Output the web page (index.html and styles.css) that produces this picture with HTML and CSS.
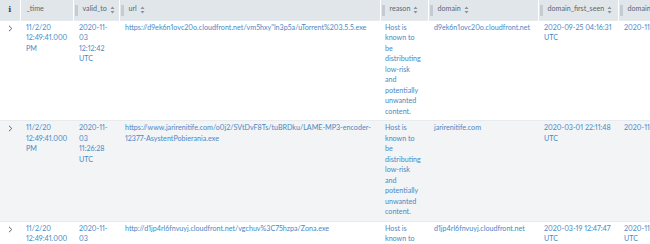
FILE: index.html
```html
<!DOCTYPE html>
<html>
<head>
<meta charset="utf-8">
<link rel="stylesheet" href="styles.css">
</head>
<body>
<div class="wrap">
<table class="results">
  <colgroup>
    <col class="c-info"><col class="c-time"><col class="c-valid"><col class="c-url"><col class="c-reason"><col class="c-domain"><col class="c-first"><col class="c-last">
  </colgroup>
  <thead>
    <tr>
      <th class="th-info"><span class="info-i">i</span></th>
      <th class="th-plain"><span class="th-label">_time</span></th>
      <th><span class="handle"></span><span class="th-label">valid_to</span><svg class="sort" viewBox="0 0 5 8" width="5" height="8"><path d="M2.5 0.5 L4.5 3 L0.5 3 Z M2.5 7.5 L4.5 5 L0.5 5 Z"/></svg></th>
      <th><span class="handle"></span><span class="th-label">url</span><svg class="sort" viewBox="0 0 5 8" width="5" height="8"><path d="M2.5 0.5 L4.5 3 L0.5 3 Z M2.5 7.5 L4.5 5 L0.5 5 Z"/></svg></th>
      <th><span class="handle"></span><span class="th-label">reason</span><svg class="sort" viewBox="0 0 5 8" width="5" height="8"><path d="M2.5 0.5 L4.5 3 L0.5 3 Z M2.5 7.5 L4.5 5 L0.5 5 Z"/></svg></th>
      <th><span class="handle"></span><span class="th-label">domain</span><svg class="sort" viewBox="0 0 5 8" width="5" height="8"><path d="M2.5 0.5 L4.5 3 L0.5 3 Z M2.5 7.5 L4.5 5 L0.5 5 Z"/></svg></th>
      <th><span class="handle"></span><span class="th-label">domain_first_seen</span><svg class="sort" viewBox="0 0 5 8" width="5" height="8"><path d="M2.5 0.5 L4.5 3 L0.5 3 Z M2.5 7.5 L4.5 5 L0.5 5 Z"/></svg></th>
      <th><span class="handle"></span><span class="th-label">domain_last_seen</span><svg class="sort" viewBox="0 0 5 8" width="5" height="8"><path d="M2.5 0.5 L4.5 3 L0.5 3 Z M2.5 7.5 L4.5 5 L0.5 5 Z"/></svg></th>
    </tr>
  </thead>
  <tbody>
    <tr>
      <td class="td-exp"><svg class="chev" viewBox="0 0 5 7" width="5" height="7"><path d="M1 0.8 L3.8 3.5 L1 6.2"/></svg></td>
      <td>11/2/20<br>12:49:41.000<br>PM</td>
      <td class="td-valid">2020-11-03 12:12:42 UTC</td>
      <td>https://d9ek6n1ovc20o.cloudfront.net/vm5hxy"ln3p5a/uTorrent%203.5.5.exe</td>
      <td class="td-reason">Host is known to be distributing low-risk and potentially unwanted content.</td>
      <td>d9ek6n1ovc20o.cloudfront.net</td>
      <td>2020-09-25 04:16:31 UTC</td>
      <td>2020-11-03 12:12:42 UTC</td>
    </tr>
    <tr class="alt">
      <td class="td-exp"><svg class="chev" viewBox="0 0 5 7" width="5" height="7"><path d="M1 0.8 L3.8 3.5 L1 6.2"/></svg></td>
      <td>11/2/20<br>12:49:41.000<br>PM</td>
      <td class="td-valid">2020-11-03 11:26:28 UTC</td>
      <td>https://www.jarirenitife.com/o0j2/SVtDvF8Ts/tuBRDku/LAME-MP3-encoder-12377-AsystentPobierania.exe</td>
      <td class="td-reason">Host is known to be distributing low-risk and potentially unwanted content.</td>
      <td>jarirenitife.com</td>
      <td>2020-03-01 22:11:48 UTC</td>
      <td>2020-11-03 11:26:28 UTC</td>
    </tr>
    <tr>
      <td class="td-exp"><svg class="chev" viewBox="0 0 5 7" width="5" height="7"><path d="M1 0.8 L3.8 3.5 L1 6.2"/></svg></td>
      <td>11/2/20<br>12:49:41.000<br>PM</td>
      <td class="td-valid">2020-11-03 12:47:47 UTC</td>
      <td>http://d1jp4rl6fnvuyj.cloudfront.net/vgchuv%3C75hzpa/Zona.exe</td>
      <td class="td-reason">Host is known to be distributing low-risk and potentially unwanted content.</td>
      <td>d1jp4rl6fnvuyj.cloudfront.net</td>
      <td>2020-03-19 12:47:47 UTC</td>
      <td>2020-11-03 12:47:47 UTC</td>
    </tr>
  </tbody>
</table>
</div>
</body>
</html>
```

FILE: styles.css
```css
html, body {
  margin: 0;
  padding: 0;
  background: #ffffff;
}
.wrap {
  width: 650px;
  height: 244px;
  overflow: hidden;
}
.results {
  table-layout: fixed;
  border-collapse: collapse;
  width: 708px;
  font-family: "Lato", "Open Sans", sans-serif;
  font-size: 7.15px;
  line-height: 10.5px;
  font-variant-numeric: proportional-nums;
}
.c-info { width: 20px; }
.c-time { width: 53px; }
.c-valid { width: 46px; }
.c-url { width: 261px; }
.c-reason { width: 48px; }
.c-domain { width: 110px; }
.c-first { width: 80px; }
.c-last { width: 90px; }

thead th {
  height: 20px;
  padding: 0 0 0 9px;
  background: #e1e6ea;
  border-left: 1px solid #ffffff;
  color: #5c6670;
  font-weight: normal;
  text-align: left;
  white-space: nowrap;
  position: relative;
  box-sizing: border-box;
  overflow: hidden;
}
thead th.th-info {
  border-left: none;
  padding: 0;
  text-align: center;
}
thead th.th-plain {
  padding-left: 6px;
}
.info-i {
  font-family: "DejaVu Serif", serif;
  font-weight: bold;
  font-size: 8px;
  color: #3c444d;
}
.handle {
  position: absolute;
  left: 1px;
  top: 5px;
  width: 3px;
  height: 11px;
  background: #c3cbd3;
}
.th-label {
  vertical-align: middle;
}
.sort {
  margin-left: 3px;
  vertical-align: middle;
  fill: #8a949e;
}

tbody td {
  padding: 2px 3px 3px 6px;
  vertical-align: top;
  color: #4a88c5;
  word-wrap: break-word;
  border-top: 1px solid #e8ebee;
}
tbody td.td-valid {
  padding-right: 9px;
}
tbody td.td-reason {
  padding-left: 5px;
  padding-right: 6px;
}
tbody tr.alt td {
  background: #f2f4f5;
}
td.td-exp {
  padding: 4px 0 0 8px;
}
.chev {
  display: block;
  fill: none;
  stroke: #5c6670;
  stroke-width: 1;
}
```
